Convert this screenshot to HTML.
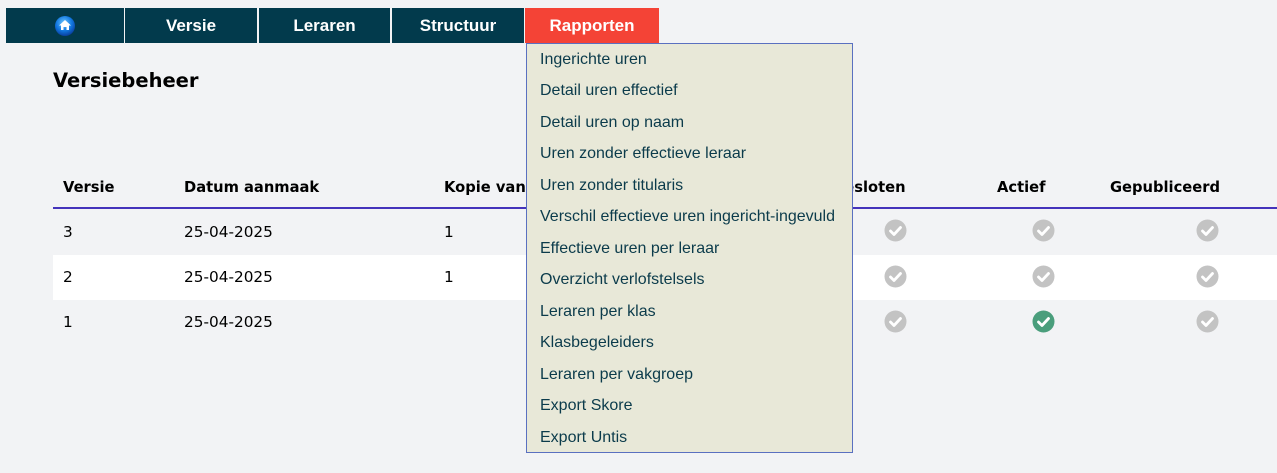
<!DOCTYPE html>
<html><head><meta charset="utf-8"><style>
*{margin:0;padding:0;box-sizing:border-box}
body{width:1277px;height:473px;background:#f2f3f5;position:relative;overflow:hidden;font-family:"DejaVu Sans",Verdana,sans-serif}
.nav div{position:absolute;top:8px;height:35px;background:#023a4c;color:#fff;font-family:"Liberation Sans",Arial,sans-serif;font-weight:bold;font-size:17px;display:flex;align-items:center;justify-content:center}
.nav div.r{background:#f44336}
h1{position:absolute;left:53px;top:69px;font-size:19.5px;font-weight:bold;color:#000}
.th{position:absolute;top:179px;font-size:14.7px;font-weight:bold;color:#000}
.line{position:absolute;left:53px;right:0;top:207px;height:2px;background:#4433bb}
.row{position:absolute;left:53px;right:0;height:45px}
.td{position:absolute;font-size:15.3px;color:#000}
.ck{position:absolute;width:23px;height:23px}
.dd{position:absolute;left:526px;top:43px;width:327px;height:410px;background:#e8e8d8;border:1px solid #5a70c0}
.dd div{position:absolute;left:13px;font-family:"Liberation Sans",Arial,sans-serif;font-size:16px;color:#0b3b4b}
</style></head><body>
<div class="nav">
<div style="left:6px;width:118px"><svg width="22" height="22" viewBox="0 0 22 22"><defs><radialGradient id="g" cx="45%" cy="35%" r="65%"><stop offset="0" stop-color="#6fc8ff"/><stop offset="0.6" stop-color="#1177e0"/><stop offset="1" stop-color="#0a3fa0"/></radialGradient></defs><circle cx="11" cy="11" r="10" fill="url(#g)"/><path d="M11 5 L17 10.5 H15 V15 H12.5 V12 H9.5 V15 H7 V10.5 H5 Z" fill="#fff"/></svg></div>
<div style="left:125px;width:132px">Versie</div>
<div style="left:259px;width:131px">Leraren</div>
<div style="left:392px;width:132px">Structuur</div>
<div class="r" style="left:525px;width:134px">Rapporten</div>
</div>
<h1>Versiebeheer</h1>
<div class="th" style="left:63px">Versie</div>
<div class="th" style="left:184px">Datum aanmaak</div>
<div class="th" style="left:444px">Kopie van</div>
<div class="th" style="left:816px">Afgesloten</div>
<div class="th" style="left:997px">Actief</div>
<div class="th" style="left:1110px">Gepubliceerd</div>
<div class="line"></div>
<div class="row" style="top:255px;background:#fff"></div>
<div class="td" style="left:63px;top:223px">3</div><div class="td" style="left:184px;top:223px">25-04-2025</div><div class="td" style="left:444px;top:223px">1</div>
<div class="td" style="left:63px;top:268px">2</div><div class="td" style="left:184px;top:268px">25-04-2025</div><div class="td" style="left:444px;top:268px">1</div>
<div class="td" style="left:63px;top:313px">1</div><div class="td" style="left:184px;top:313px">25-04-2025</div>
<svg width="0" height="0" style="position:absolute"><defs><symbol id="c" viewBox="0 0 23 23"><circle cx="11.5" cy="11.5" r="11" fill="currentColor"/><path d="M6.5 12 L10 15.5 L16.5 8.5" stroke="#fff" stroke-width="2.8" fill="none" stroke-linecap="round" stroke-linejoin="round"/></symbol></defs></svg>
<svg class="ck" style="left:884px;top:219px;color:#c3c3c3"><use href="#c"/></svg>
<svg class="ck" style="left:1032px;top:219px;color:#c3c3c3"><use href="#c"/></svg>
<svg class="ck" style="left:1196px;top:219px;color:#c3c3c3"><use href="#c"/></svg>
<svg class="ck" style="left:884px;top:265px;color:#c3c3c3"><use href="#c"/></svg>
<svg class="ck" style="left:1032px;top:265px;color:#c3c3c3"><use href="#c"/></svg>
<svg class="ck" style="left:1196px;top:265px;color:#c3c3c3"><use href="#c"/></svg>
<svg class="ck" style="left:884px;top:310px;color:#c3c3c3"><use href="#c"/></svg>
<svg class="ck" style="left:1032px;top:310px;color:#4a9e7c"><use href="#c"/></svg>
<svg class="ck" style="left:1196px;top:310px;color:#c3c3c3"><use href="#c"/></svg>
<div class="dd">
<div style="top:7px">Ingerichte uren</div>
<div style="top:38px">Detail uren effectief</div>
<div style="top:70px">Detail uren op naam</div>
<div style="top:101px">Uren zonder effectieve leraar</div>
<div style="top:133px">Uren zonder titularis</div>
<div style="top:164px">Verschil effectieve uren ingericht-ingevuld</div>
<div style="top:196px">Effectieve uren per leraar</div>
<div style="top:227px">Overzicht verlofstelsels</div>
<div style="top:259px">Leraren per klas</div>
<div style="top:290px">Klasbegeleiders</div>
<div style="top:322px">Leraren per vakgroep</div>
<div style="top:353px">Export Skore</div>
<div style="top:385px">Export Untis</div>
</div>
</body></html>
